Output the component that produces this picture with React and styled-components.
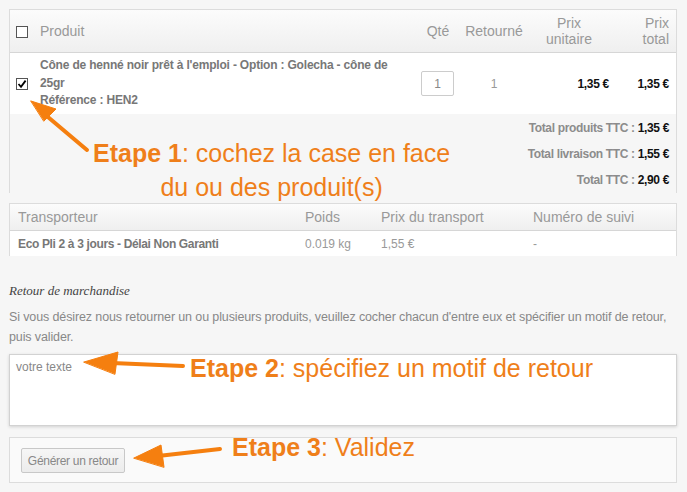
import styled, { createGlobalStyle } from "styled-components";

const Global = createGlobalStyle`
    html, body {
        margin: 0;
        padding: 0;
        background: #f6f6f6;
    }
    body {
        font-family: "Liberation Sans", Arial, sans-serif;
        color: #777;
    }
`

// PAGE
const Page = styled.div`
    position: relative;
    padding: 9px 10px 9px 9px;
    height: 474px;
    overflow: hidden;
`

// TABLEAU PRODUITS
const Commande = styled.div`
    border: 1px solid #dcdcdc;
    border-bottom: none;
`

const Grille = styled.div`
    display: grid;
    grid-template-columns: 24px 1fr 46px 66px 84px 65px;
    align-items: center;
`

const Entete = styled(Grille)`
    height: 42px;
    background: linear-gradient(#fcfcfc, #efefef);
    border-bottom: 1px solid #d6d6d6;
    color: #999;
    font-size: 14px;
    line-height: 16px;
`

const Cellule = styled.div`
    text-align: ${p => p.$align || "left"};
    padding-right: ${p => p.$pr || 0}px;
    padding-left: ${p => p.$pl || 0}px;
`

const LigneProduit = styled(Grille)`
    height: 61px;
    background: #fff;
    font-size: 12px;
`

const CaseCocher = styled.span`
    display: inline-block;
    box-sizing: border-box;
    width: 12px;
    height: 12px;
    margin-left: 6px;
    border: 1px solid #555;
    background: #fff;
    position: relative;
    vertical-align: middle;
    svg {
        position: absolute;
        left: 0;
        top: 0;
    }
`

const NomProduit = styled.div`
    font-weight: bold;
    color: #777;
    line-height: 17.5px;
    padding-left: 6px;
    letter-spacing: -0.19px;
`

const Quantite = styled.div`
    box-sizing: border-box;
    width: 33px;
    height: 25px;
    margin-left: 6px;
    border: 1px solid #ccc;
    border-radius: 2px;
    background: #fff;
    display: flex;
    align-items: center;
    justify-content: center;
    color: #888;
    font-size: 12px;
`

const Prix = styled.div`
    text-align: right;
    font-weight: bold;
    color: #111;
    padding-right: ${p => p.$pr || 0}px;
    letter-spacing: -0.3px;
`

const Totaux = styled.div`
    padding: 0 7px 0 0;
    height: 79px;
    display: flex;
    flex-direction: column;
    align-items: flex-end;
    justify-content: center;
    border-right: 1px solid #dcdcdc;
    margin-right: -1px;
`

const LigneTotal = styled.div`
    font-size: 12px;
    font-weight: bold;
    color: #8c8c8c;
    line-height: 26px;
    letter-spacing: -0.35px;
    b {
        color: #111;
    }
`

// TABLEAU TRANSPORT
const Transport = styled.div`
    margin-top: 10px;
    border: 1px solid #dcdcdc;
    border-bottom: none;
`

const GrilleTransport = styled.div`
    display: grid;
    grid-template-columns: 287px 76px 152px 1fr;
    align-items: center;
    padding-left: 8px;
`

const EnteteTransport = styled(GrilleTransport)`
    height: 26px;
    background: linear-gradient(#fcfcfc, #efefef);
    border-bottom: 1px solid #d6d6d6;
    color: #999;
    font-size: 14px;
`

const LigneTransport = styled(GrilleTransport)`
    height: 25px;
    background: #fff;
    font-size: 12px;
    color: #999;
`

const Gras = styled.span`
    font-weight: bold;
    color: #777;
    letter-spacing: -0.35px;
`

// RETOUR
const TitreRetour = styled.h3`
    margin: 27px 0 0 0;
    font-family: "Liberation Serif", serif;
    font-style: italic;
    font-weight: normal;
    font-size: 13px;
    color: #444;
    line-height: 16px;
`

const TexteRetour = styled.p`
    margin: 8px 0 0 0;
    font-size: 12.5px;
    line-height: 20px;
    color: #888;
    letter-spacing: -0.12px;
`

const ZoneTexte = styled.div`
    margin-top: 7px;
    height: 72px;
    background: #fff;
    border: 1px solid #d2d2d2;
    box-shadow: 0 1px 3px rgba(0, 0, 0, 0.15);
    padding: 5px 6px;
    box-sizing: border-box;
    font-size: 12px;
    color: #888;
`

const PiedRetour = styled.div`
    margin-top: 11px;
    height: 46px;
    box-sizing: border-box;
    background: #fafafa;
    border: 1px solid #dcdcdc;
    padding: 10px 0 0 11px;
`

const Bouton = styled.button`
    height: 25px;
    width: 104px;
    background: linear-gradient(#f6f6f6, #ececec);
    border: 1px solid #c8c8c8;
    border-radius: 2px;
    font-family: "Liberation Sans", Arial, sans-serif;
    font-size: 12px;
    color: #888;
    padding: 0;
    letter-spacing: -0.3px;
`

// ANNOTATIONS
const Fleches = styled.svg`
    position: absolute;
    left: 0;
    top: 0;
    pointer-events: none;
`

const Note = styled.div`
    position: absolute;
    left: ${p => p.$x}px;
    top: ${p => p.$y}px;
    color: #ef7f1a;
    font-size: 25px;
    line-height: 34px;
    text-align: center;
    white-space: nowrap;
    b {
        font-weight: bold;
    }
`

function Coche() {
    return (
        <svg width="10" height="10" viewBox="0 0 10 10">
            <path d="M1.5 5 L4 7.8 L8.6 1.6" fill="none" stroke="#000" strokeWidth="1.8" />
        </svg>
    )
}

export default function App() {
    return (
        <>
            <Global />
            <Page>
                {/* TABLEAU PRODUITS */}
                <Commande>
                    <Entete>
                        <Cellule><CaseCocher /></Cellule>
                        <Cellule $pl={6}>Produit</Cellule>
                        <Cellule $align="center">Qté</Cellule>
                        <Cellule $align="center">Retourné</Cellule>
                        <Cellule $align="center">Prix<br />unitaire</Cellule>
                        <Cellule $align="right" $pr={7}>Prix<br />total</Cellule>
                    </Entete>
                    <LigneProduit>
                        <Cellule><CaseCocher><Coche /></CaseCocher></Cellule>
                        <NomProduit>
                            Cône de henné noir prêt à l'emploi - Option : Golecha - cône de<br />
                            25gr<br />
                            Référence : HEN2
                        </NomProduit>
                        <Cellule><Quantite>1</Quantite></Cellule>
                        <Cellule $align="center" style={{ color: "#999" }}>1</Cellule>
                        <Prix $pr={2}>1,35 €</Prix>
                        <Prix $pr={7}>1,35 €</Prix>
                    </LigneProduit>
                    <Totaux>
                        <LigneTotal>Total produits TTC : <b>1,35 €</b></LigneTotal>
                        <LigneTotal>Total livraison TTC : <b>1,55 €</b></LigneTotal>
                        <LigneTotal>Total TTC : <b>2,90 €</b></LigneTotal>
                    </Totaux>
                </Commande>

                {/* TABLEAU TRANSPORT */}
                <Transport>
                    <EnteteTransport>
                        <div>Transporteur</div>
                        <div>Poids</div>
                        <div>Prix du transport</div>
                        <div>Numéro de suivi</div>
                    </EnteteTransport>
                    <LigneTransport>
                        <Gras>Eco Pli 2 à 3 jours - Délai Non Garanti</Gras>
                        <div>0.019 kg</div>
                        <div>1,55 €</div>
                        <div>-</div>
                    </LigneTransport>
                </Transport>

                {/* RETOUR DE MARCHANDISE */}
                <TitreRetour>Retour de marchandise</TitreRetour>
                <TexteRetour>
                    Si vous désirez nous retourner un ou plusieurs produits, veuillez cocher chacun d'entre eux et spécifier un motif de retour, puis valider.
                </TexteRetour>
                <ZoneTexte>votre texte</ZoneTexte>
                <PiedRetour>
                    <Bouton>Générer un retour</Bouton>
                </PiedRetour>

                {/* ANNOTATIONS */}
                <Fleches width="687" height="492">
                    <g fill="#f57f0f" stroke="#f57f0f" strokeLinecap="round">
                        <path d="M87 150 L42 112" strokeWidth="4" fill="none" />
                        <path d="M31 101 L56 109 L44 121 Z" />
                        <path d="M183 366 L112 363" strokeWidth="4" fill="none" />
                        <path d="M84 362 L118 352 L115 374 Z" />
                        <path d="M220 449 L158 456" strokeWidth="4" fill="none" />
                        <path d="M134 458 L161 445 L164 467 Z" />
                    </g>
                </Fleches>
                <Note $x={93} $y={136}>
                    <b>Etape 1</b>: cochez la case en face<br />du ou des produit(s)
                </Note>
                <Note $x={190} $y={351}>
                    <b>Etape 2</b>: spécifiez un motif de retour
                </Note>
                <Note $x={232} $y={430}>
                    <b>Etape 3</b>: Validez
                </Note>
            </Page>
        </>
    )
}
